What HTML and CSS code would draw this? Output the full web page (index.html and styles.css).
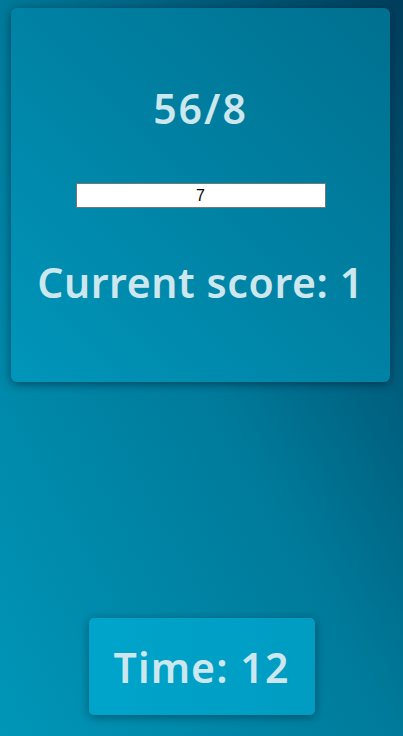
FILE: index.html
```html
<!DOCTYPE html>
<html>
<head>
<meta charset="utf-8">
<link rel="stylesheet" href="styles.css">
</head>
<body>
<div class="page">
  <div class="card">
    <div class="question">56/8</div>
    <input class="answer" type="text" value="7">
    <div class="score">Current score: 1</div>
  </div>
  <div class="timer">Time: 12</div>
</div>
</body>
</html>
```
FILE: styles.css
```css
html, body {
  margin: 0;
  padding: 0;
  height: 100%;
}
body {
  background: linear-gradient(to top right, #0096b8 0%, #007a9a 50%, #003e5c 100%);
  font-family: "Noto Sans", "Open Sans", sans-serif;
  color: #cde7ef;
}
.page {
  height: 736px;
  display: flex;
  flex-direction: column;
  align-items: center;
}
.card {
  margin: 8px 13px 0 11px;
  align-self: stretch;
  height: 374px;
  border-radius: 6px;
  background: linear-gradient(to top right, #0096ba 0%, #0082a4 50%, #00708f 100%);
  box-shadow: 0 2px 10px rgba(0, 20, 40, 0.55);
  display: flex;
  flex-direction: column;
  align-items: center;
  box-sizing: border-box;
  padding-top: 72px;
}
.question {
  font-size: 41px;
  font-weight: 650;
  line-height: 56px;
  letter-spacing: 2px;
}
.answer {
  margin-top: 47px;
  width: 250px;
  height: 25px;
  box-sizing: border-box;
  border: 1px solid #767676;
  background: #fff;
  font-family: "Liberation Sans", Arial, sans-serif;
  font-size: 16px;
  text-align: center;
  padding: 0 2px;
  color: #000;
}
.score {
  margin-top: 46px;
  font-size: 41px;
  font-weight: 650;
  line-height: 56px;
  letter-spacing: 0.6px;
}
.timer {
  margin-top: auto;
  margin-bottom: 21px;
  width: 226px;
  height: 97px;
  border-radius: 5px;
  background: linear-gradient(to right, #00a4ca, #009cc2);
  box-shadow: 0 2px 10px rgba(0, 20, 40, 0.45);
  display: flex;
  align-items: center;
  justify-content: center;
  font-size: 41px;
  font-weight: 650;
  letter-spacing: 1.1px;
}
```
